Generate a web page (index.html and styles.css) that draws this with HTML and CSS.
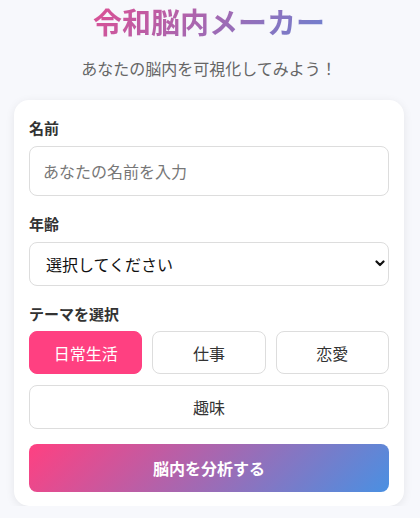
FILE: index.html
```html
<!DOCTYPE html>
<html lang="ja">
<head>
    <meta charset="UTF-8">
    <meta name="viewport" content="width=device-width, initial-scale=1.0">
    <title>令和脳内メーカー</title>
    <link rel="stylesheet" href="styles.css">
</head>
<body>
    <div class="container">
        <h1>令和脳内メーカー</h1>
        <p class="subtitle">あなたの脳内を可視化してみよう！</p>

        <form id="brainForm" class="card">
            <div class="form-group">
                <label for="name">名前</label>
                <input type="text" id="name" name="name" placeholder="あなたの名前を入力">
            </div>

            <div class="form-group">
                <label for="age">年齢</label>
                <div class="select-wrap">
                    <select id="age" name="age">
                        <option value="">選択してください</option>
                        <option value="10">10代</option>
                        <option value="20">20代</option>
                        <option value="30">30代</option>
                        <option value="40">40代</option>
                        <option value="50">50代以上</option>
                    </select>
                    <svg class="chevron" width="10" height="7" viewBox="0 0 10 7">
                        <path d="M1.5 1.5 L5 5 L8.5 1.5" fill="none" stroke="#111" stroke-width="2.2" stroke-linecap="round" stroke-linejoin="round"/>
                    </svg>
                </div>
            </div>

            <div class="form-group">
                <label class="theme-label">テーマを選択</label>
                <div class="themes">
                    <button type="button" class="theme active">日常生活</button>
                    <button type="button" class="theme">仕事</button>
                    <button type="button" class="theme">恋愛</button>
                    <button type="button" class="theme">趣味</button>
                </div>
            </div>

            <button type="submit" class="submit">脳内を分析する</button>
        </form>
    </div>

    <script>
        document.querySelectorAll('.theme').forEach(function(btn) {
            btn.addEventListener('click', function() {
                document.querySelectorAll('.theme').forEach(b => b.classList.remove('active'));
                btn.classList.add('active');
            });
        });
        document.getElementById('brainForm').addEventListener('submit', function(e) {
            e.preventDefault();
        });
    </script>
</body>
</html>
```

FILE: styles.css
```css
body {
    font-family: "Noto Sans CJK JP", "Noto Sans", sans-serif;
    margin: 0;
    padding: 4px 16px 0 14px;
    background-color: #f7f8fc;
    color: #333;
}
.container {
    max-width: 390px;
    margin: 0 auto;
}
h1 {
    margin: 0;
    font-size: 29px;
    line-height: 34px;
    font-weight: bold;
    text-align: center;
    background: linear-gradient(135deg, #ff4081, #4a90e2);
    -webkit-background-clip: text;
    background-clip: text;
    color: transparent;
}
.subtitle {
    margin: 18px 0 0;
    font-size: 16px;
    line-height: 24px;
    text-align: center;
    color: #666;
}
.card {
    margin-top: 20px;
    padding: 17px 15px 14px;
    background-color: #ffffff;
    border-radius: 15px;
    box-shadow: 0 2px 10px rgba(0,0,0,0.08);
}
.form-group {
    margin-bottom: 17px;
}
label {
    display: block;
    margin-bottom: 8px;
    font-size: 15px;
    line-height: 21px;
    font-weight: bold;
    color: #333;
}
.theme-label {
    margin-bottom: 7px;
}
input[type="text"], select {
    display: block;
    width: 100%;
    box-sizing: border-box;
    border: 1px solid #ddd;
    border-radius: 8px;
    font-family: inherit;
    font-size: 16px;
    background-color: #fff;
    color: #111;
}
input[type="text"] {
    height: 50px;
    padding: 0 13px;
}
input::placeholder {
    color: #777;
}
.select-wrap {
    position: relative;
}
select {
    height: 44px;
    padding: 0 30px 0 16px;
    -webkit-appearance: none;
    appearance: none;
}
.chevron {
    position: absolute;
    right: 4px;
    top: 18px;
    pointer-events: none;
}
.themes {
    display: flex;
    flex-wrap: wrap;
    gap: 11px 10px;
}
.theme {
    flex: 1 0 30%;
    height: 43px;
    border: 1px solid #ddd;
    border-radius: 8px;
    background-color: #fff;
    font-family: inherit;
    font-size: 16px;
    color: #333;
    cursor: pointer;
}
.theme:last-child {
    height: 44px;
}
.theme.active {
    background-color: #ff4081;
    border-color: #ff4081;
    color: #fff;
}
.submit {
    display: block;
    width: 100%;
    height: 48px;
    margin-top: -2px;
    border: none;
    border-radius: 8px;
    background: linear-gradient(135deg, #ff4081, #4a90e2);
    font-family: inherit;
    font-size: 16px;
    font-weight: bold;
    color: #fff;
    cursor: pointer;
}
```
